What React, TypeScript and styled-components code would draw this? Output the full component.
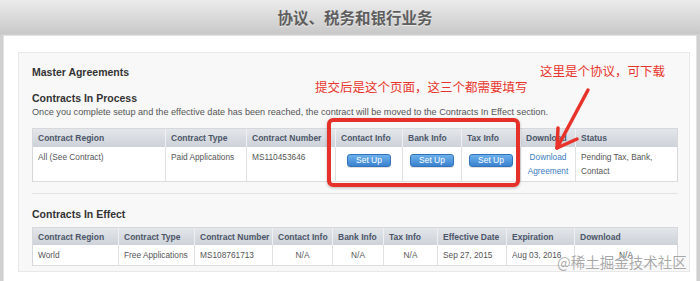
import React from "react";
import styled, { createGlobalStyle } from "styled-components";

const GlobalStyle = createGlobalStyle`
  html, body { margin: 0; padding: 0; background: #d0d0d0; }
  body { font-family: "Liberation Sans", "Noto Sans CJK SC", sans-serif; }
  * { box-sizing: border-box; }
`;

const Page = styled.div`
  position: relative;
  width: 700px;
  height: 281px;
  overflow: hidden;
  background: #cfcfcf;
  display: flex;
  flex-direction: column;
`;

const TitleBar = styled.div`
  height: 34px;
  flex-shrink: 0;
  padding-left: 10px;
  background: linear-gradient(#ececec, #c8c8c8);
  display: flex;
  align-items: center;
  justify-content: center;
  font-family: "Noto Sans CJK SC", sans-serif;
  font-size: 15.5px;
  font-weight: 700;
  color: #5e5e5e;
  text-shadow: 0 1px 0 rgba(255, 255, 255, 0.6);
`;

const Panel = styled.div`
  flex: 1;
  margin: 1px 3px 0;
  background: #fff;
  border: 1px solid #e2e2e2;
  border-bottom: none;
  padding: 16px 6px 0 14px;
`;

const Box = styled.div`
  background: #f8f8f8;
  border: 1px solid #e8e8e8;
  padding: 12px 11px 5px 13px;
  display: flex;
  flex-direction: column;
`;

const Heading = styled.div<{ $mt: number }>`
  margin-top: ${(p) => p.$mt}px;
  font-size: 10.5px;
  line-height: 14px;
  font-weight: 700;
  color: #333;
  white-space: nowrap;
`;

const Desc = styled.div`
  margin-top: 1px;
  font-size: 9.15px;
  line-height: 12px;
  color: #555;
  white-space: nowrap;
`;

const Table = styled.div<{ $mt: number }>`
  margin-top: ${(p) => p.$mt}px;
  border: 1px solid #d6d8dc;
  border-bottom-color: #dcdcdc;
  display: flex;
  flex-direction: column;
`;

const Row = styled.div<{ $cols: string; $h: number }>`
  display: grid;
  grid-template-columns: ${(p) => p.$cols};
  height: ${(p) => p.$h}px;
`;

const HeadCell = styled.div`
  background: linear-gradient(#e3e6ea, #cdd2d9);
  border-left: 1px solid #eef0f3;
  &:first-child { border-left: none; }
  display: flex;
  align-items: center;
  padding-left: 5px;
  font-size: 8.5px;
  font-weight: 700;
  color: #4b5568;
  white-space: nowrap;
  overflow: hidden;
`;

const Cell = styled.div<{ $center?: boolean; $middle?: boolean }>`
  background: #fff;
  border-left: 1px solid #e0e0e0;
  &:first-child { border-left: none; }
  padding: ${(p) => (p.$middle ? "0 5px" : "3px 5px 0")};
  display: flex;
  flex-direction: column;
  align-items: ${(p) => (p.$center ? "center" : "flex-start")};
  justify-content: ${(p) => (p.$middle ? "center" : "flex-start")};
  text-align: ${(p) => (p.$center ? "center" : "left")};
  font-size: 8.3px;
  line-height: 14px;
  color: #555;
  white-space: nowrap;
`;

const SetUpButton = styled.button`
  margin-top: 4px;
  width: 44px;
  height: 13px;
  padding: 0;
  border: 1px solid #3172bb;
  border-radius: 3px;
  background: linear-gradient(#6cb0ec, #3a82cf);
  color: #fff;
  font-family: "Liberation Sans", sans-serif;
  font-size: 8.5px;
  line-height: 11px;
  box-shadow: 0 1px 0 rgba(0, 0, 0, 0.12);
`;

const Link = styled.a`
  color: #3a7dc0;
  text-decoration: none;
`;

const Divider = styled.div`
  margin-top: 11px;
  height: 1px;
  background: #e3e3e3;
`;

const Overlay = styled.div`
  position: absolute;
  inset: 0;
  pointer-events: none;
`;

const RedFrame = styled.div`
  position: absolute;
  left: 327px;
  top: 118px;
  width: 193px;
  height: 69px;
  border: 4px solid #e6302a;
  border-radius: 6px;
  box-shadow: 0 1px 3px rgba(0, 0, 0, 0.25);
`;

const Note = styled.div<{ $x: number; $y: number }>`
  position: absolute;
  left: ${(p) => p.$x}px;
  top: ${(p) => p.$y}px;
  font-family: "Noto Sans CJK SC", sans-serif;
  font-size: 12.5px;
  line-height: 16px;
  color: #e8352c;
  white-space: nowrap;
`;

const ArrowSvg = styled.svg`
  position: absolute;
  left: 0;
  top: 0;
`;

const Watermark = styled.div`
  position: absolute;
  left: 557px;
  top: 252px;
  font-family: "Noto Sans CJK SC", sans-serif;
  font-size: 14.5px;
  line-height: 20px;
  color: rgba(140, 140, 140, 0.75);
  text-shadow: 0 0 1px #fff;
  white-space: nowrap;
`;

const COLS1 = "132px 81px 89px 67px 59px 59px 55px 1fr";
const COLS2 = "85px 76px 78px 60px 51px 54px 69px 68px 1fr";

const head1 = [
  "Contract Region",
  "Contract Type",
  "Contract Number",
  "Contact Info",
  "Bank Info",
  "Tax Info",
  "Download",
  "Status",
];

const head2 = [
  "Contract Region",
  "Contract Type",
  "Contract Number",
  "Contact Info",
  "Bank Info",
  "Tax Info",
  "Effective Date",
  "Expiration",
  "Download",
];

const row2: { text: string; center?: boolean }[] = [
  { text: "World" },
  { text: "Free Applications" },
  { text: "MS108761713" },
  { text: "N/A", center: true },
  { text: "N/A", center: true },
  { text: "N/A", center: true },
  { text: "Sep 27, 2015" },
  { text: "Aug 03, 2016" },
  { text: "N/A", center: true },
];

export default function App() {
  return (
    <>
      <GlobalStyle />
      <Page>
        <TitleBar>协议、税务和银行业务</TitleBar>
        <Panel>
          <Box>
            <Heading $mt={0}>Master Agreements</Heading>
            <Heading $mt={12}>Contracts In Process</Heading>
            <Desc>
              Once you complete setup and the effective date has been reached, the contract will be moved to the
              Contracts In Effect section.
            </Desc>
            <Table $mt={10}>
              <Row $cols={COLS1} $h={18}>
                {head1.map((h) => (
                  <HeadCell key={h}>{h}</HeadCell>
                ))}
              </Row>
              <Row $cols={COLS1} $h={34}>
                <Cell>All (See Contract)</Cell>
                <Cell>Paid Applications</Cell>
                <Cell>MS110453646</Cell>
                <Cell $center>
                  <SetUpButton>Set Up</SetUpButton>
                </Cell>
                <Cell $center>
                  <SetUpButton>Set Up</SetUpButton>
                </Cell>
                <Cell $center>
                  <SetUpButton>Set Up</SetUpButton>
                </Cell>
                <Cell $center>
                  <Link href="#">
                    Download
                    <br />
                    Agreement
                  </Link>
                </Cell>
                <Cell>
                  <span>
                    Pending Tax, Bank,
                    <br />
                    Contact
                  </span>
                </Cell>
              </Row>
            </Table>
            <Divider />
            <Heading $mt={13}>Contracts In Effect</Heading>
            <Table $mt={6}>
              <Row $cols={COLS2} $h={17}>
                {head2.map((h) => (
                  <HeadCell key={h}>{h}</HeadCell>
                ))}
              </Row>
              <Row $cols={COLS2} $h={20}>
                {row2.map((c, i) => (
                  <Cell key={i} $center={c.center} $middle>
                    {c.text}
                  </Cell>
                ))}
              </Row>
            </Table>
          </Box>
        </Panel>
        <Overlay>
          <RedFrame />
          <Note $x={315} $y={79}>提交后是这个页面，这三个都需要填写</Note>
          <Note $x={540} $y={63}>这里是个协议，可下载</Note>
          <ArrowSvg width="700" height="281" viewBox="0 0 700 281">
            <g stroke="#e8322a" strokeWidth="3.5" strokeLinecap="round" strokeLinejoin="round" fill="none">
              <path d="M588 90 L557 148" />
              <path d="M558 128 L557 148 L577 139" />
            </g>
          </ArrowSvg>
          <Watermark>@稀土掘金技术社区</Watermark>
        </Overlay>
      </Page>
    </>
  );
}
